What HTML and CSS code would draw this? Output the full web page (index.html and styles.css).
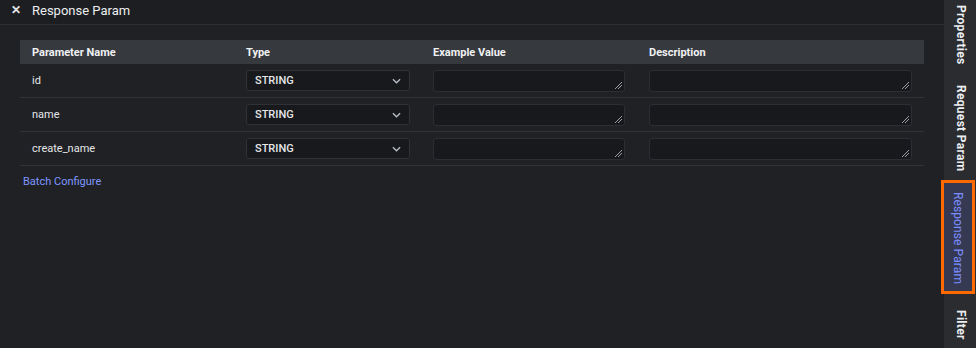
FILE: index.html
```html
<!DOCTYPE html>
<html lang="en">
<head>
  <meta charset="UTF-8" />
  <title>Response Param</title>
  <link rel="stylesheet" href="styles.css">
</head>
<body>

<div class="layout">
  <div class="panel">
    <div class="panel-head">
      <span class="close">&#x2715;</span>
      <span class="panel-title">Response Param</span>
    </div>

    <div class="panel-body">
      <table class="params">
        <thead>
          <tr>
            <th class="col-name">Parameter Name</th>
            <th class="col-type">Type</th>
            <th class="col-example">Example Value</th>
            <th class="col-desc">Description</th>
          </tr>
        </thead>
        <tbody>
          <tr>
            <td>id</td>
            <td><div class="select">STRING <svg class="caret" viewBox="0 0 10 6"><path d="M1 1l4 4 4-4" /></svg></div></td>
            <td><div class="area"></div></td>
            <td><div class="area"></div></td>
          </tr>
          <tr>
            <td>name</td>
            <td><div class="select">STRING <svg class="caret" viewBox="0 0 10 6"><path d="M1 1l4 4 4-4" /></svg></div></td>
            <td><div class="area"></div></td>
            <td><div class="area"></div></td>
          </tr>
          <tr>
            <td>create_name</td>
            <td><div class="select">STRING <svg class="caret" viewBox="0 0 10 6"><path d="M1 1l4 4 4-4" /></svg></div></td>
            <td><div class="area"></div></td>
            <td><div class="area"></div></td>
          </tr>
        </tbody>
      </table>

      <a class="batch" href="#">Batch Configure</a>
    </div>
  </div>

  <div class="sidebar">
    <div class="tab tab-props">Properties</div>
    <div class="tab tab-req">Request Param</div>
    <div class="tab tab-resp active">Response Param</div>
    <div class="tab tab-filter">Filter</div>
  </div>
</div>

</body>
</html>
```

FILE: styles.css
```css
body {
  margin: 0;
  font-family: Roboto, "Liberation Sans", sans-serif;
  background: #1f2125;
  color: #e6e7e9;
  width: 976px;
  height: 348px;
  overflow: hidden;
}

.layout {
  display: flex;
  height: 348px;
}

.panel {
  flex: 1;
  background: #1f2125;
}

.panel-head {
  height: 24px;
  border-bottom: 1px solid #2c2e33;
  display: flex;
  align-items: center;
  background: #1c1e22;
}

.close {
  width: 32px;
  text-align: center;
  font-size: 12px;
  font-weight: bold;
  color: #e6e7e9;
  margin-top: -4px;
}

.panel-title {
  font-size: 13px;
  margin-top: -4px;
  color: #eceef0;
}

.panel-body {
  padding: 15px 20px 0 20px;
}

.params {
  width: 904px;
  border-collapse: collapse;
  table-layout: fixed;
  font-size: 11px;
}

.params th {
  background: #36393e;
  height: 24px;
  text-align: left;
  font-weight: bold;
  padding: 0 12px;
  color: #f0f1f3;
}

.col-name { width: 190px; }
.col-type { width: 163px; }
.col-example { width: 192px; }

.params td {
  height: 33px;
  padding: 0 12px;
  border-bottom: 1px solid #303237;
}

.select {
  height: 21px;
  box-sizing: border-box;
  border: 1px solid #2f3136;
  border-radius: 3px;
  background: #17191d;
  display: flex;
  align-items: center;
  justify-content: space-between;
  padding: 0 8px 0 8px;
  font-weight: 500;
  width: 164px;
}

.caret {
  width: 9px;
  height: 6px;
  fill: none;
  stroke: #b8bcc4;
  stroke-width: 1.5;
}

.area {
  height: 22px;
  box-sizing: border-box;
  border: 1px solid #2c2e33;
  border-radius: 3px;
  background: #17191d;
  position: relative;
}

.area::after {
  content: "";
  position: absolute;
  right: 2px;
  bottom: 2px;
  width: 7px;
  height: 7px;
  background: linear-gradient(135deg, transparent 45%, #9a9da3 45%, #9a9da3 52%, transparent 52%, transparent 70%, #9a9da3 70%, #9a9da3 78%, transparent 78%);
}

.batch {
  display: block;
  margin-top: 9px;
  margin-left: 3px;
  font-size: 11px;
  color: #7f97ff;
  text-decoration: none;
}

.sidebar {
  width: 32px;
  background: #2a2c30;
  display: flex;
  flex-direction: column;
}

.tab {
  writing-mode: vertical-rl;
  white-space: nowrap;
  font-size: 12px;
  font-weight: bold;
  color: #eceef0;
  display: flex;
  align-items: center;
  padding-left: 2px;
  letter-spacing: 0.3px;
}

.tab-props { height: 63px; padding-top: 5px; box-sizing: border-box; }
.tab-req { height: 117px; padding-top: 22px; box-sizing: border-box; }

.tab-resp {
  margin-left: -3px;
  width: 34px;
  height: 114px;
  box-sizing: border-box;
  border: 3px solid #ff6a00;
  padding-left: 0;
  background: #353a52;
  color: #7c8eff;
  font-weight: normal;
  padding-top: 9px;
  letter-spacing: 0.1px;
}

.tab-filter { padding-top: 16px; }
```
